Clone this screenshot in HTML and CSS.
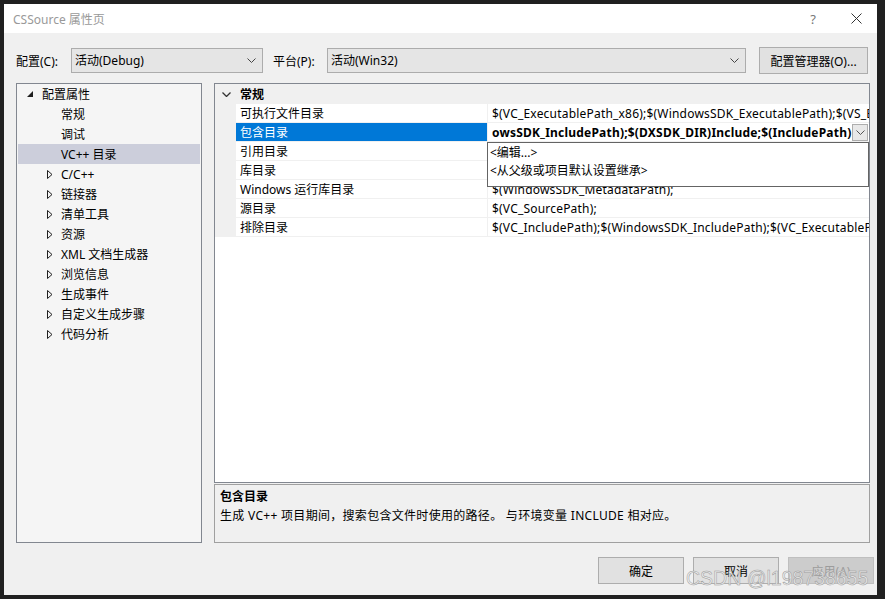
FILE: index.html
```html
<!DOCTYPE html>
<html lang="zh-CN">
<head>
  <meta charset="UTF-8">
  <meta name="viewport" content="width=device-width, initial-scale=1.0">
  <title>CSSource 属性页</title>
  <link rel="stylesheet" href="styles.css">
</head>
<body>

  <div class="window">
    <div class="titlebar">
      <span class="title">CSSource 属性页</span>
      <span class="help">?</span>
      <svg class="close" width="11" height="11" viewBox="0 0 11 11">
        <path d="M0.5 0.5 L10.5 10.5 M10.5 0.5 L0.5 10.5" stroke="#333" stroke-width="1" fill="none"/>
      </svg>
    </div>

    <div class="content">
      <div class="config-row">
        <span class="cfg-label">配置(C):</span>
        <div class="combo combo-config">
          <span>活动(Debug)</span>
          <svg class="chev" width="9" height="5" viewBox="0 0 9 5"><path d="M0.5 0.5 L4.5 4.5 L8.5 0.5" stroke="#444" fill="none"/></svg>
        </div>
        <span class="cfg-label plat">平台(P):</span>
        <div class="combo combo-platform">
          <span>活动(Win32)</span>
          <svg class="chev" width="9" height="5" viewBox="0 0 9 5"><path d="M0.5 0.5 L4.5 4.5 L8.5 0.5" stroke="#444" fill="none"/></svg>
        </div>
        <button class="btn mgr">配置管理器(O)...</button>
      </div>

      <div class="main">
        <div class="tree">
          <div class="node root">
            <svg class="tri-open" width="6" height="6" viewBox="0 0 6 6"><polygon points="6,0 6,6 0,6" fill="#1e1e1e"/></svg>
            配置属性
          </div>
          <div class="node leaf">常规</div>
          <div class="node leaf">调试</div>
          <div class="node leaf selected">VC++ 目录</div>
          <div class="node branch"><svg class="tri" width="6" height="9" viewBox="0 0 6 9"><polygon points="0.5,0.5 5,4.5 0.5,8.5" fill="none" stroke="#1e1e1e"/></svg>C/C++</div>
          <div class="node branch"><svg class="tri" width="6" height="9" viewBox="0 0 6 9"><polygon points="0.5,0.5 5,4.5 0.5,8.5" fill="none" stroke="#1e1e1e"/></svg>链接器</div>
          <div class="node branch"><svg class="tri" width="6" height="9" viewBox="0 0 6 9"><polygon points="0.5,0.5 5,4.5 0.5,8.5" fill="none" stroke="#1e1e1e"/></svg>清单工具</div>
          <div class="node branch"><svg class="tri" width="6" height="9" viewBox="0 0 6 9"><polygon points="0.5,0.5 5,4.5 0.5,8.5" fill="none" stroke="#1e1e1e"/></svg>资源</div>
          <div class="node branch"><svg class="tri" width="6" height="9" viewBox="0 0 6 9"><polygon points="0.5,0.5 5,4.5 0.5,8.5" fill="none" stroke="#1e1e1e"/></svg>XML 文档生成器</div>
          <div class="node branch"><svg class="tri" width="6" height="9" viewBox="0 0 6 9"><polygon points="0.5,0.5 5,4.5 0.5,8.5" fill="none" stroke="#1e1e1e"/></svg>浏览信息</div>
          <div class="node branch"><svg class="tri" width="6" height="9" viewBox="0 0 6 9"><polygon points="0.5,0.5 5,4.5 0.5,8.5" fill="none" stroke="#1e1e1e"/></svg>生成事件</div>
          <div class="node branch"><svg class="tri" width="6" height="9" viewBox="0 0 6 9"><polygon points="0.5,0.5 5,4.5 0.5,8.5" fill="none" stroke="#1e1e1e"/></svg>自定义生成步骤</div>
          <div class="node branch"><svg class="tri" width="6" height="9" viewBox="0 0 6 9"><polygon points="0.5,0.5 5,4.5 0.5,8.5" fill="none" stroke="#1e1e1e"/></svg>代码分析</div>
        </div>

        <div class="right">
          <div class="grid">
            <div class="cat">
              <span class="gutter">
                <svg width="9" height="5" viewBox="0 0 9 5"><path d="M0.5 0.5 L4.5 4.5 L8.5 0.5" stroke="#333" stroke-width="1.3" fill="none"/></svg>
              </span>
              <span class="cat-name">常规</span>
            </div>
            <div class="prop">
              <span class="gutter"></span>
              <span class="name">可执行文件目录</span>
              <span class="value">$(VC_ExecutablePath_x86);$(WindowsSDK_ExecutablePath);$(VS_ExecutablePath);$(MSBuild_ExecutablePath);$(SystemRoot)</span>
            </div>
            <div class="prop sel">
              <span class="gutter"></span>
              <span class="name">包含目录</span>
              <span class="value editing">
                <span class="edit-text">owsSDK_IncludePath);$(DXSDK_DIR)Include;$(IncludePath)</span>
                <span class="drop-btn">
                  <svg width="9" height="5" viewBox="0 0 9 5"><path d="M0.5 0.5 L4.5 4.5 L8.5 0.5" stroke="#555" fill="none"/></svg>
                </span>
                <div class="drop-list">
                  <div class="drop-item">&lt;编辑...&gt;</div>
                  <div class="drop-item">&lt;从父级或项目默认设置继承&gt;</div>
                </div>
              </span>
            </div>
            <div class="prop">
              <span class="gutter"></span>
              <span class="name">引用目录</span>
              <span class="value"></span>
            </div>
            <div class="prop">
              <span class="gutter"></span>
              <span class="name">库目录</span>
              <span class="value"></span>
            </div>
            <div class="prop">
              <span class="gutter"></span>
              <span class="name">Windows 运行库目录</span>
              <span class="value">$(WindowsSDK_MetadataPath);</span>
            </div>
            <div class="prop">
              <span class="gutter"></span>
              <span class="name">源目录</span>
              <span class="value">$(VC_SourcePath);</span>
            </div>
            <div class="prop">
              <span class="gutter"></span>
              <span class="name">排除目录</span>
              <span class="value">$(VC_IncludePath);$(WindowsSDK_IncludePath);$(VC_ExecutablePath_x86);$(VC_LibraryPath_x86)</span>
            </div>
          </div>

          <div class="desc">
            <div class="desc-title">包含目录</div>
            <div class="desc-text">生成 VC++ 项目期间，搜索包含文件时使用的路径。 与环境变量 INCLUDE 相对应。</div>
          </div>
        </div>
      </div>

      <div class="buttons">
        <button class="btn">确定</button>
        <button class="btn">取消</button>
        <button class="btn disabled">应用(A)</button>
      </div>
    </div>
  </div>

  <div class="watermark">CSDN @l198738655</div>

</body>
</html>
```

FILE: styles.css
```css
* {
  box-sizing: border-box;
}

body {
  margin: 0;
  width: 885px;
  height: 599px;
  overflow: hidden;
  position: relative;
  background-color: #202020;
  font-family: "Noto Sans", "Noto Sans CJK SC", sans-serif;
  font-size: 12px;
  color: #000;
}

.window {
  margin: 4px 0 0 4px;
  width: 873px;
  height: 591px;
  background-color: #f0f0f0;
  display: flex;
  flex-direction: column;
}

/* title bar */
.titlebar {
  height: 29px;
  flex-shrink: 0;
  background-color: #fff;
  display: flex;
  align-items: center;
  padding: 0 15px 0 9px;
}

.title {
  color: #999;
}

.help {
  margin-left: auto;
  width: 10px;
  text-align: center;
  color: #777;
  font-size: 13px;
  position: relative;
  left: 2px;
}

.close {
  margin-left: 35px;
}

.content {
  flex: 1;
  display: flex;
  flex-direction: column;
  padding-left: 12px;
}

/* config row */
.config-row {
  margin-top: 14px;
  height: 27px;
  display: flex;
  align-items: center;
}

.cfg-label {
  width: 55px;
}

.cfg-label.plat {
  margin-left: 10px;
  width: 54px;
}

.combo {
  height: 25px;
  border: 1px solid #acacac;
  background-color: #e5e5e5;
  display: flex;
  align-items: center;
  justify-content: space-between;
  padding: 0 6px 1px 3px;
}

.combo-config {
  width: 192px;
}

.combo-platform {
  width: 419px;
}

.btn {
  font: inherit;
  color: #000;
  border: 1px solid #adadad;
  background-color: #e1e1e1;
  padding: 0;
  width: 86px;
  height: 27px;
}

.btn.mgr {
  margin-left: 13px;
  width: 109px;
}

.btn.disabled {
  background-color: #cccccc;
  border-color: #bfbfbf;
  color: #9c9c9c;
}

/* main area */
.main {
  margin-top: 9px;
  height: 460px;
  display: flex;
  gap: 12px;
}

.tree {
  width: 186px;
  border: 1px solid #828790;
  background-color: #f5f5f5;
  padding: 0 1px;
}

.node {
  height: 20px;
  display: flex;
  align-items: center;
  white-space: nowrap;
}

.node.root {
  padding-left: 9px;
}

.node.root svg {
  margin-right: 9px;
}

.node.branch {
  padding-left: 29px;
}

.node.branch svg {
  margin-right: 8px;
}

.node.leaf {
  padding-left: 43px;
}

.node.selected {
  background-color: #cccedb;
}

.right {
  width: 656px;
  display: flex;
  flex-direction: column;
  gap: 1px;
}

/* property grid */
.grid {
  height: 400px;
  border: 1px solid #828790;
  background-color: #fff;
}

.cat {
  height: 20px;
  display: flex;
  align-items: center;
  background-color: #f0f0f0;
}

.cat .gutter {
  display: flex;
  align-items: center;
  padding-left: 7px;
}

.cat-name {
  font-weight: bold;
  padding-left: 4px;
}

.gutter {
  width: 21px;
  flex-shrink: 0;
  height: 100%;
  background-color: #f0f0f0;
}

.prop {
  height: 19px;
  display: flex;
}

.prop .name {
  width: 251px;
  flex-shrink: 0;
  padding: 1px 0 0 4px;
  line-height: 17px;
  border-bottom: 1px solid #f0f0f0;
  white-space: nowrap;
}

.prop .value {
  flex: 1;
  min-width: 0;
  padding: 1px 0 0 4px;
  line-height: 17px;
  letter-spacing: 0.2px;
  border-left: 1px solid #f0f0f0;
  border-bottom: 1px solid #f0f0f0;
  white-space: nowrap;
  overflow: hidden;
}

.prop.sel .name {
  background-color: #0078d7;
  color: #fff;
}

.prop .value.editing {
  position: relative;
  overflow: visible;
  display: flex;
  align-items: center;
  padding: 0 1px 0 4px;
  letter-spacing: 0;
}

.edit-text {
  flex: 1;
  min-width: 0;
  overflow: hidden;
  font-weight: bold;
  letter-spacing: 0.2px;
  padding-top: 1px;
}

.drop-btn {
  width: 16px;
  height: 17px;
  flex-shrink: 0;
  border: 1px solid #adadad;
  background-color: #e8e8e8;
  display: flex;
  align-items: center;
  justify-content: center;
}

.drop-list {
  position: absolute;
  top: 19px;
  left: -1px;
  right: 0;
  height: 45px;
  background-color: #fff;
  border: 1px solid #646464;
  padding: 1px 0 0 2px;
  z-index: 2;
}

.drop-item {
  line-height: 18px;
}

/* description */
.desc {
  height: 59px;
  border: 1px solid #a0a0a0;
  background-color: #f0f0f0;
  padding: 2px 5px;
  line-height: 19px;
}

.desc-title {
  font-weight: bold;
}

.desc-text {
  letter-spacing: 0.3px;
}

/* dialog buttons */
.buttons {
  margin-top: 14px;
  display: flex;
  justify-content: flex-end;
  gap: 9px;
  padding-right: 3px;
}

.watermark {
  position: absolute;
  left: 686px;
  top: 567px;
  font-family: "Liberation Sans", sans-serif;
  font-size: 19.5px;
  color: rgba(240, 240, 240, 0.8);
  -webkit-text-stroke: 0.5px #999;
  white-space: nowrap;
}
```
